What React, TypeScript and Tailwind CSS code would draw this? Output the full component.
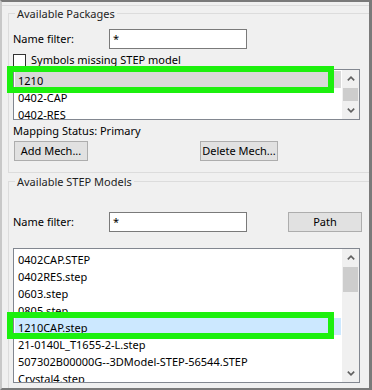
import React from 'react';

const font = { fontFamily: '"Noto Sans", "Segoe UI", Arial, sans-serif' };

const Chevron = ({ up }: { up?: boolean }) => (
  <svg width="8" height="5" viewBox="0 0 8 5">
    <path
      d={up ? 'M0.8 4.4L4 1.2L7.2 4.4' : 'M0.8 0.6L4 3.8L7.2 0.6'}
      stroke="#606060"
      strokeWidth="1.6"
      fill="none"
    />
  </svg>
);

interface ScrollProps {
  thumbTop: number;
  thumbHeight: number;
}

const ScrollBar: React.FC<ScrollProps> = ({ thumbTop, thumbHeight }) => (
  <div className="w-[17px] bg-[#f0f0f0] flex flex-col">
    <div className="h-[17px] flex items-center justify-center">
      <Chevron up />
    </div>
    <div className="flex-1 relative">
      <div
        className="absolute left-[1px] right-[1px] bg-[#cdcdcd]"
        style={{ top: thumbTop, height: thumbHeight }}
      />
    </div>
    <div className="h-[17px] flex items-center justify-center">
      <Chevron />
    </div>
  </div>
);

interface ListProps {
  items: string[];
  selected: number;
  selColor: string;
  height: string;
  thumbTop: number;
  thumbHeight: number;
}

const ListBox: React.FC<ListProps> = ({ items, selected, selColor, height, thumbTop, thumbHeight }) => (
  <div className={`w-[347px] ${height} border border-[#828790] bg-white flex overflow-hidden`}>
    <div className="flex-1 pt-[1px] px-[1px] overflow-hidden">
      {items.map((it, i) => (
        <div
          key={it}
          className="h-[17px] leading-[19px] pl-[3px] whitespace-nowrap text-[11px] text-black"
          style={i === selected ? { backgroundColor: selColor } : undefined}
        >
          {it}
        </div>
      ))}
    </div>
    <ScrollBar thumbTop={thumbTop} thumbHeight={thumbHeight} />
  </div>
);

const Button: React.FC<{ label: string; width: string }> = ({ label, width }) => (
  <button
    className={`block ${width} h-[20px] border border-[#adadad] bg-[#e1e1e1] text-[11px] text-black leading-[18px] text-center whitespace-nowrap`}
  >
    {label}
  </button>
);

const NameFilter = () => (
  <div className="flex items-center h-[20px]">
    <span className="w-[96px] text-[11px] text-black">Name filter:</span>
    <div className="w-[138px] h-[20px] border border-[#7a7a7a] bg-white text-[11px] leading-[18px] pl-[3px] text-black">
      *
    </div>
  </div>
);

export default function App() {
  return (
    <div
      className="w-[372px] h-[390px] bg-[#f0f0f0] relative overflow-hidden border-t-2 border-r-[3px] border-b-2 border-l-[2px] border-t-[#7a7a7a] border-r-[#7a7a7a] border-b-[#7a7a7a] border-l-[#c8c8c8]"
      style={font}
    >
      <div className="h-[4px] border-b border-[#dcdcdc]" />

      <fieldset className="ml-[6px] w-[420px] border border-[#dcdcdc] pb-[11px]">
        <legend className="ml-[6px] px-[2px] text-[11px] leading-[15px] text-[#1e1e1e]">Available Packages</legend>
        <div className="pl-[4px]">
          <div className="mt-[8px]">
            <NameFilter />
          </div>
          <div className="mt-[4px] h-[14px] flex items-center gap-[5px]">
            <div className="w-[13px] h-[13px] border border-[#333] bg-white" />
            <span className="text-[11px] text-black">Symbols missing STEP model</span>
          </div>
          <div className="mt-[2px]">
            <ListBox
              items={['1210', '0402-CAP', '0402-RES']}
              selected={0}
              selColor="#d9d9d9"
              height="h-[51px]"
              thumbTop={1}
              thumbHeight={13}
            />
          </div>
          <div className="mt-[3px] h-[15px] leading-[15px] text-[11px] text-black">Mapping Status: Primary</div>
          <div className="mt-[3px] flex w-[347px]">
            <div className="ml-[1px]">
              <Button label="Add Mech..." width="w-[74px]" />
            </div>
            <div className="ml-[112px]">
              <Button label="Delete Mech..." width="w-[78px]" />
            </div>
          </div>
        </div>
      </fieldset>

      <fieldset className="mt-[1px] ml-[6px] w-[420px] h-[260px] border border-[#dcdcdc]">
        <legend className="ml-[6px] px-[2px] text-[11px] leading-[15px] text-[#1e1e1e]">Available STEP Models</legend>
        <div className="pl-[4px]">
          <div className="mt-[23px] flex items-center">
            <NameFilter />
            <div className="ml-[41px]">
              <Button label="Path" width="w-[74px]" />
            </div>
          </div>
          <div className="mt-[16px]">
            <ListBox
              items={[
                '0402CAP.STEP',
                '0402RES.step',
                '0603.step',
                '0805.step',
                '1210CAP.step',
                '21-0140L_T1655-2-L.step',
                '507302B00000G--3DModel-STEP-56544.STEP',
                'Crystal4.step',
              ]}
              selected={4}
              selColor="#cce8ff"
              height="h-[135px]"
              thumbTop={1}
              thumbHeight={25}
            />
          </div>
        </div>
      </fieldset>

      <div className="absolute left-[5px] top-[64px] w-[327px] h-[27px] border-[6px] border-[#1cf00e]" />
      <div className="absolute left-[5px] top-[310px] w-[327px] h-[27px] border-[6px] border-[#1cf00e]" />
    </div>
  );
}
